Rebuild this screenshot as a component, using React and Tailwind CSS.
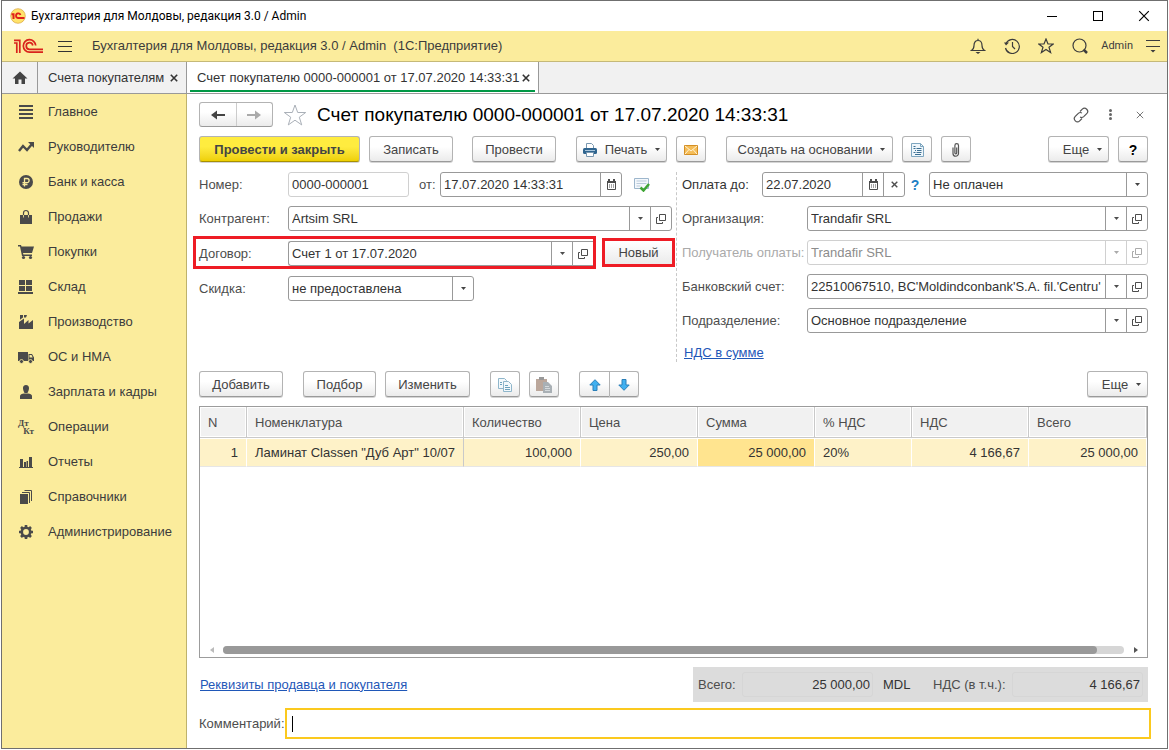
import { useState } from 'react'
import clsx from 'clsx'

const sections = [
  { title: 'Главное', icon: 'lines' },
  { title: 'Руководителю', icon: 'trend' },
  { title: 'Банк и касса', icon: 'ruble' },
  { title: 'Продажи', icon: 'bag' },
  { title: 'Покупки', icon: 'cart' },
  { title: 'Склад', icon: 'boxes' },
  { title: 'Производство', icon: 'factory' },
  { title: 'ОС и НМА', icon: 'truck' },
  { title: 'Зарплата и кадры', icon: 'person' },
  { title: 'Операции', icon: 'dtkt' },
  { title: 'Отчеты', icon: 'chart' },
  { title: 'Справочники', icon: 'books' },
  { title: 'Администрирование', icon: 'gear' },
]

const columns = [
  { key: 'n', title: 'N', col: 'w-[47px]', right: true },
  { key: 'item', title: 'Номенклатура', col: 'w-[217px]', pinned: true },
  { key: 'qty', title: 'Количество', col: 'w-[117px]', right: true },
  { key: 'price', title: 'Цена', col: 'w-[117px]', right: true },
  { key: 'sum', title: 'Сумма', col: 'w-[117px]', right: true },
  { key: 'rate', title: '% НДС', col: 'w-[97px]' },
  { key: 'vat', title: 'НДС', col: 'w-[117px]', right: true },
  { key: 'total', title: 'Всего', col: 'w-[118px]', right: true },
]

const rows = [
  {
    n: '1',
    item: 'Ламинат Classen "Дуб Арт" 10/07',
    qty: '100,000',
    price: '250,00',
    sum: '25 000,00',
    rate: '20%',
    vat: '4 166,67',
    total: '25 000,00',
  },
]

const sectionShapes = {
  lines: <path d="M1 1h14v2H1zM1 5h14v2H1zM1 9h14v2H1zM1 13h14v2H1z" />,
  trend: (
    <>
      <path d="M1 12l4-5 4 4 5-6" fill="none" stroke="currentColor" strokeWidth="2.4" />
      <path d="M10 3h6v6z" />
    </>
  ),
  ruble: (
    <>
      <circle cx="8" cy="8" r="7" />
      <path d="M6.5 12.500V4.500h2.500a2 2 0 0 1 0 4.200H4.500M4.500 10.500h5" fill="none" stroke="#fbec9c" strokeWidth="1.300" />
    </>
  ),
  bag: (
    <>
      <path d="M2 6h12v9H2z" />
      <path d="M5.500 8V4a2.500 2.500 0 0 1 5 0v4" fill="none" stroke="currentColor" strokeWidth="1.200" />
      <path d="M5.500 6v2.500M10.500 6v2.500" stroke="#fbec9c" strokeWidth="0.800" />
    </>
  ),
  cart: (
    <>
      <path d="M0 1h3l.5 1.500H16L14 9H5l.4 1.500H14V12H4L2 2.500H0z" />
      <circle cx="5.500" cy="13.500" r="1.600" />
      <circle cx="12.500" cy="13.500" r="1.600" />
    </>
  ),
  boxes: <path d="M1 1h6v5H1zM8 1h6v5H8zM1 7h6v5H1zM8 7h6v5H8zM0 13h15v2H0z" />,
  factory: <path d="M1 15V8l5-3.500V10l4.500-4v3.500L15 6v9zM2 1h3v2.500L2 5.800zM6 1h3L8 3.500H6z" />,
  truck: (
    <>
      <path d="M0 3h10v9H0zM10.500 5H14l2 3.500V12h-5.500z" />
      <path d="M11.500 6h2l1.200 2.500h-3.200z" fill="#fbec9c" />
      <circle cx="3.500" cy="12.500" r="2" stroke="#fbec9c" strokeWidth="0.800" />
      <circle cx="12.500" cy="12.500" r="2" stroke="#fbec9c" strokeWidth="0.800" />
    </>
  ),
  person: (
    <>
      <path d="M8 1c2 0 3.200 1.200 3 3.500C10.800 6.500 9.800 8 9.500 9h-3C6.200 8 5.200 6.500 5 4.500 4.800 2.200 6 1 8 1z" />
      <path d="M2 15v-3c0-1.500 2-2.500 4-2.500h4c2 0 4 1 4 2.500v3z" />
    </>
  ),
  chart: <path d="M1 13h14v1H1zM2 5h3v8H2zM6 8h2v5H6zM8.500 7h1.500v6H8.500zM11 3h3v10h-3z" />,
  books: (
    <>
      <path d="M2 5h8v10H2z" />
      <path d="M4 3.500h7.500V14M6.500 1.500h7V12" fill="none" stroke="currentColor" />
    </>
  ),
  gear: (
    <>
      <circle cx="8" cy="8" r="4.200" fill="none" stroke="currentColor" strokeWidth="2.600" />
      <path
        d="M8 1v2.500M8 12.500V15M1 8h2.500M12.500 8H15M3 3l2 2M11 11l2 2M3 13l2-2M11 5l2-2"
        stroke="currentColor"
        strokeWidth="2.600"
      />
    </>
  ),
}

function SectionIcon({ name }) {
  if (name === 'dtkt') {
    return (
      <span aria-hidden="true" className="flex h-4 w-4 flex-col font-['Liberation_Serif',serif] text-[9px] leading-[8px] font-bold">
        <span>Дт</span>
        <span className="self-end">Кт</span>
      </span>
    )
  }
  return (
    <svg viewBox="0 0 16 16" className="h-4 w-4 shrink-0" fill="currentColor" aria-hidden="true">
      {sectionShapes[name]}
    </svg>
  )
}

function Logo({ className }) {
  return (
    <svg viewBox="0 0 30 16" className={className} fill="none" stroke="#d9231c" strokeWidth="1.700" aria-hidden="true">
      <path d="M0 5h2.800V15M0 2.300h5.800V15" />
      <path d="M21.700 7.500A6.200 6.200 0 1 0 15.500 14.100H29" />
      <path d="M18.800 7.500A3.300 3.300 0 1 0 15.500 11.300H29" />
    </svg>
  )
}

function Caret({ className }) {
  return (
    <svg viewBox="0 0 5 3" className={clsx('h-[3px] w-[5px] shrink-0', className)} fill="currentColor" aria-hidden="true">
      <path d="M0 0h5L2.500 3z" />
    </svg>
  )
}

function CalendarIcon() {
  return (
    <svg viewBox="0 0 11 11" className="h-[11px] w-[11px]" aria-hidden="true">
      <path d="M1.500 2.500h8v8h-8z" fill="none" stroke="currentColor" />
      <path d="M1 2h9v2H1zM2 0h2v2H2zM7 0h2v2H7z" fill="currentColor" />
      <path d="M3 6h1M5 6h1M7 6h1M3 8h1M5 8h1M7 8h1" stroke="currentColor" />
    </svg>
  )
}

function OpenIcon() {
  return (
    <svg viewBox="0 0 10 10" className="h-[10px] w-[10px]" fill="none" stroke="currentColor" aria-hidden="true">
      <path d="M3.500 .5h6v6h-6zM2 3.500H.5v6h6V8" />
    </svg>
  )
}

function CrossIcon({ className, width = 1 }) {
  return (
    <svg viewBox="0 0 10 10" className={className} fill="none" stroke="currentColor" strokeWidth={width} aria-hidden="true">
      <path d="M1 1l8 8M9 1L1 9" />
    </svg>
  )
}

function Button({ className, children, ...props }) {
  return (
    <button
      type="button"
      className={clsx(
        'flex h-[26px] shrink-0 items-center justify-center rounded-[3px] border border-[#b3b3b3] border-b-[#9a9a9a] bg-linear-to-b from-white from-40% to-[#ebebeb] pt-px whitespace-nowrap text-[#444] shadow-[0_1px_0_#d5d5d5]',
        className
      )}
      {...props}
    >
      {children}
    </button>
  )
}

const actionIcons = {
  list: <Caret />,
  open: <OpenIcon />,
  calendar: <CalendarIcon />,
  clear: <CrossIcon className="h-[7px] w-[7px]" width={2} />,
}

const actionTitles = { list: 'Выбрать', open: 'Открыть', calendar: 'Календарь', clear: 'Очистить' }

function Field({ id, value, actions = [], className, disabled, readOnly }) {
  return (
    <div
      className={clsx(
        'flex h-[25px] min-w-0 overflow-hidden rounded-[3px] border bg-white',
        disabled ? 'border-[#d0d0d0] text-[#8c8c8c]' : readOnly ? 'border-[#d0d0d0] text-[#333]' : 'border-[#999] text-[#333]',
        className
      )}
    >
      <input
        id={id}
        defaultValue={value}
        disabled={disabled}
        readOnly={readOnly}
        className="mr-[2px] min-w-0 flex-1 bg-transparent pl-[3px] outline-none"
      />
      {actions.map((name) => (
        <button
          key={name}
          type="button"
          disabled={disabled}
          aria-label={actionTitles[name]}
          className={clsx(
            'flex w-[21px] shrink-0 items-center justify-center border-l',
            disabled ? 'border-[#d0d0d0] text-[#aaa]' : 'border-[#999] text-[#4d4d4d]'
          )}
        >
          {actionIcons[name]}
        </button>
      ))}
    </div>
  )
}

function SelectField({ id, options, className, label }) {
  return (
    <div className={clsx('flex h-[25px] overflow-hidden rounded-[3px] border border-[#999] bg-white text-[#333]', className)}>
      <select id={id} aria-label={label} className="min-w-0 flex-1 appearance-none pl-[3px] outline-none">
        {options.map((option) => (
          <option key={option}>{option}</option>
        ))}
      </select>
      <span className="pointer-events-none flex w-[21px] items-center justify-center border-l border-[#999] text-[#444]">
        <Caret />
      </span>
    </div>
  )
}

function TitleBar() {
  return (
    <header className="flex h-[30px] items-center bg-white pl-2 text-black">
      <svg viewBox="0 0 16 16" className="h-4 w-4" aria-hidden="true">
        <circle cx="8" cy="8" r="7.300" fill="#ffe36b" stroke="#d9a441" strokeWidth="0.700" />
        <path d="M1.500 6.300h2V11" fill="none" stroke="#e0201b" strokeWidth="2" />
        <path d="M10.500 7A2.300 2.300 0 1 0 8 10h6.500" fill="none" stroke="#e0201b" strokeWidth="1.800" />
      </svg>
      <span className="ml-[5px] flex-1 font-['Roboto','Noto_Sans',sans-serif] text-[12px]">
        Бухгалтерия для Молдовы, редакция 3.0 / Admin
      </span>
      <button type="button" aria-label="Свернуть" className="flex w-[46px] justify-center">
        <span className="h-px w-[10px] bg-black" />
      </button>
      <button type="button" aria-label="Развернуть" className="flex w-[46px] justify-center">
        <span className="h-[10px] w-[10px] border border-black" />
      </button>
      <button type="button" aria-label="Закрыть окно" className="flex w-[46px] justify-center">
        <CrossIcon className="h-3 w-3" />
      </button>
    </header>
  )
}

function AppBar() {
  return (
    <div className="flex h-[31px] items-center border-b border-[#c5b978] bg-[#fbec9c] pr-[7px] pl-3 text-[#3c3c3c]">
      <Logo className="h-4 w-[30px]" />
      <button type="button" aria-label="Меню" className="ml-[14px] flex w-[14px] flex-col gap-1">
        <span className="h-px bg-[#333]" />
        <span className="h-px bg-[#333]" />
        <span className="h-px bg-[#333]" />
      </button>
      <span className="ml-5 flex-1 whitespace-pre">Бухгалтерия для Молдовы, редакция 3.0 / Admin  (1С:Предприятие)</span>
      <div className="flex items-center gap-[18px]">
        <button type="button" aria-label="Уведомления">
          <svg viewBox="0 0 16 16" className="h-4 w-4" fill="none" stroke="currentColor" strokeWidth="1.200">
            <path d="M1.500 12.500h13c-2-1.200-2.500-3-2.500-5C12 4.500 10.500 2.500 8 2.500S4 4.500 4 7.500c0 2-.5 3.800-2.500 5zM8 2.500V.800" />
            <path d="M5.500 14h5L8 16z" fill="currentColor" stroke="none" />
          </svg>
        </button>
        <button type="button" aria-label="История">
          <svg viewBox="0 0 16 16" className="h-4 w-4" fill="none" stroke="currentColor" strokeWidth="1.200">
            <path d="M2 5.500A7 7 0 1 1 1.500 10M8.500 4v4.500L11 11" />
            <path d="M0 4.500h5L2 7.500z" fill="currentColor" stroke="none" />
          </svg>
        </button>
        <button type="button" aria-label="Избранное">
          <svg viewBox="0 0 16 16" className="h-4 w-4" fill="none" stroke="currentColor" strokeWidth="1.200">
            <path d="M8 1l2 5h5.200l-4.200 3.300 1.600 5.200L8 11.400l-4.600 3.100L5 9.300.800 6H6z" />
          </svg>
        </button>
        <button type="button" aria-label="Поиск">
          <svg viewBox="0 0 16 16" className="h-4 w-4" fill="none" stroke="currentColor" strokeWidth="1.200">
            <circle cx="7.500" cy="7.500" r="6.500" />
            <path d="M11.500 11.500l3.500 3.500" strokeWidth="2.500" />
          </svg>
        </button>
      </div>
      <a href="#user" className="ml-[13px] font-['Roboto',sans-serif] text-[11px]">
        Admin
      </a>
      <button type="button" aria-label="Настройки" className="ml-[13px]">
        <svg viewBox="0 0 14 14" className="h-[14px] w-[14px]" fill="none" stroke="currentColor">
          <path d="M0 1.500h14M0 7.500h14" />
          <path d="M4.500 11h5L7 13.500z" fill="currentColor" stroke="none" />
        </svg>
      </button>
    </div>
  )
}

function OpenTabs() {
  return (
    <nav className="flex h-8 border-b border-[#999] bg-[#f1f1f1] text-[#333]">
      <a href="#home" aria-label="Начальная страница" className="flex w-9 items-center justify-center border-r border-[#999] text-[#444]">
        <svg viewBox="0 0 16 14" className="h-[14px] w-4" fill="currentColor">
          <path d="M8 .5L15.500 7.500H13V13H9.500V8.500h-3V13H3V7.500H.5z" />
        </svg>
      </a>
      <div className="flex w-[149px] items-center justify-between border-r border-[#999] pr-2 pl-[10px]">
        <a href="#invoices" className="whitespace-nowrap">Счета покупателям</a>
        <button type="button" aria-label="Закрыть вкладку">
          <CrossIcon className="h-2 w-2" width={2} />
        </button>
      </div>
      <div className="flex w-[352px] flex-col border-r border-[#999] bg-white px-[3px] pt-[3px] pb-px">
        <div className="flex flex-1 items-center justify-between border-b-2 border-[#009846] pr-[5px] pl-[7px]">
          <a href="#invoice" className="whitespace-nowrap">Счет покупателю 0000-000001 от 17.07.2020 14:33:31</a>
          <button type="button" aria-label="Закрыть вкладку">
            <CrossIcon className="h-2 w-2" width={2} />
          </button>
        </div>
      </div>
    </nav>
  )
}

function Sidebar() {
  return (
    <aside className="w-[185px] shrink-0 border-r border-[#beb26c] bg-[#fbec9c] text-[#3c3c3c]">
      {sections.map(({ title, icon }) => (
        <a key={title} href="#section" className="flex h-[35px] items-center gap-[14px] pt-px pl-4 whitespace-nowrap">
          <span className="text-[#4a4a4a]">
            <SectionIcon name={icon} />
          </span>
          {title}
        </a>
      ))}
    </aside>
  )
}

function FormHeader() {
  return (
    <div className="flex h-[25px] items-center">
      <div className="flex h-[25px] w-[74px] rounded-[3px] border border-[#b3b3b3] border-b-[#9a9a9a] bg-linear-to-b from-white from-40% to-[#ebebeb]">
        <button type="button" aria-label="Назад" className="flex flex-1 items-center justify-center border-r border-[#ccc] text-[#444]">
          <svg viewBox="0 0 14 10" className="h-[10px] w-[14px]" fill="none" stroke="currentColor" strokeWidth="2">
            <path d="M14 5H3" />
            <path d="M0 5l6-4.500v9z" fill="currentColor" stroke="none" />
          </svg>
        </button>
        <button type="button" aria-label="Вперед" className="flex flex-1 items-center justify-center text-[#aaa]">
          <svg viewBox="0 0 14 10" className="h-[10px] w-[14px]" fill="none" stroke="currentColor" strokeWidth="2">
            <path d="M0 5h11" />
            <path d="M14 5L8 .5v9z" fill="currentColor" stroke="none" />
          </svg>
        </button>
      </div>
      <button type="button" aria-label="В избранное" className="ml-[10px]">
        <svg viewBox="0 0 24 22" className="h-[22px] w-6" fill="none" stroke="#aab0b8">
          <path d="M12 1l2.700 7.500h8l-6.400 4.700 2.400 7.700L12 16.200l-6.700 4.700 2.400-7.700L1.300 8.500h8z" />
        </svg>
      </button>
      <h1 className="ml-[10px] flex-1 text-[19px] whitespace-nowrap text-black">Счет покупателю 0000-000001 от 17.07.2020 14:33:31</h1>
      <div className="flex items-center pr-1 text-[#555]">
        <button type="button" aria-label="Получить ссылку">
          <svg viewBox="0 0 16 16" className="h-4 w-4" fill="none" stroke="currentColor" strokeWidth="1.200">
            <path d="M7 4.500l2.300-2.300a3 3 0 0 1 4.400 4.400l-3 3a3 3 0 0 1-3.600.4M9 11.500l-2.300 2.300a3 3 0 0 1-4.400-4.400l3-3a3 3 0 0 1 3.600-.4" />
          </svg>
        </button>
        <button type="button" aria-label="Еще действия" className="ml-5 flex w-[3px] flex-col gap-px">
          <span className="h-[3px] rounded-full bg-[#666]" />
          <span className="h-[3px] rounded-full bg-[#666]" />
          <span className="h-[3px] rounded-full bg-[#666]" />
        </button>
        <button type="button" aria-label="Закрыть" className="ml-6">
          <CrossIcon className="h-2 w-2" />
        </button>
      </div>
    </div>
  )
}

function CommandBar() {
  return (
    <div className="mt-[9px] flex">
      <Button className="w-[161px] border-[#a89000] border-b-[#a89000] from-[#ffec3f]! from-0% to-[#eed000]! font-bold">
        Провести и закрыть
      </Button>
      <Button className="ml-[9px] w-[84px]">Записать</Button>
      <Button className="ml-[19px] w-[84px]">Провести</Button>
      <Button className="ml-5 w-[91px]">
        <svg viewBox="0 0 14 14" className="mr-2 h-[14px] w-[14px]" aria-hidden="true">
          <path d="M3.500.5h5l2 2V6h-7z" fill="#fff" stroke="#7a98b0" />
          <rect y="5" width="14" height="6" rx="1.500" fill="#30658f" />
          <path d="M2 7.500h10" stroke="#a9c6dc" />
          <path d="M3.500 9.500h7v4h-7z" fill="#fff" stroke="#7a98b0" />
        </svg>
        Печать
        <Caret className="ml-2" />
      </Button>
      <Button className="ml-[9px] w-[30px]" aria-label="Отправить по почте">
        <svg viewBox="0 0 14 10" className="h-[10px] w-[14px]">
          <path d="M.5.5h13v9H.5z" fill="#f5bd58" stroke="#d48f24" />
          <path d="M1 1l6 5 6-5M1 9l4-4.500M13 9L9 4.500" fill="none" stroke="#fff3d6" />
        </svg>
      </Button>
      <Button className="ml-5 w-[167px] pl-1">
        Создать на основании
        <Caret className="ml-2" />
      </Button>
      <Button className="ml-[9px] w-[30px]" aria-label="Отчет">
        <svg viewBox="0 0 13 14" className="h-[14px] w-[13px]" fill="none">
          <path d="M.5.5h9l3 3v10H.5z" fill="#eef6fb" stroke="#7ea6bf" />
          <path d="M9.500.5v3h3" stroke="#7ea6bf" />
          <path d="M2.500 3.500h2M2.500 5.500h2M5.500 5.500h5M4 7.500h1M6 7.500h4.500M2.500 9.500h2M5.500 9.500h5M4 11.500h6" stroke="#3c6f92" />
        </svg>
      </Button>
      <Button className="ml-[9px] w-[30px]" aria-label="Файлы">
        <svg viewBox="0 0 8 14" className="h-[14px] w-2" fill="none" stroke="#555" strokeWidth="1.200">
          <path d="M1 4.500v6a2.500 2.500 0 0 0 5.500 0v-8a1.800 1.800 0 0 0-3.600 0v7.500a.9.9 0 0 0 1.800 0V4.500" />
        </svg>
      </Button>
      <Button className="ml-auto w-[61px] pl-2">
        Еще
        <Caret className="ml-2" />
      </Button>
      <Button className="ml-[9px] w-[30px] text-[14px] font-bold text-black!" aria-label="Справка">
        ?
      </Button>
    </div>
  )
}

function InvoiceForm() {
  return (
    <form className="mt-[10px] grid grid-cols-[477fr_472fr] text-[#4d4d4d]">
      <div className="pr-1">
        <div className="flex items-center">
          <label htmlFor="number" className="w-[89px] shrink-0">Номер:</label>
          <Field id="number" value="0000-000001" readOnly className="w-[121px]" />
          <label htmlFor="date" className="w-[31px] shrink-0 pl-[10px]">от:</label>
          <Field id="date" value="17.07.2020 14:33:31" actions={['calendar']} className="w-[182px]" />
          <svg viewBox="0 0 16 14" className="ml-3 h-[14px] w-4" aria-hidden="true">
            <path d="M.5.5h14v10H.5z" fill="#f4f8fc" stroke="#9db6cc" />
            <path d="M2.500 3h10M2.500 5.500h10M2.500 8h4" stroke="#b9cadb" />
            <path d="M6.500 9.500l3 3 5.500-6.500" fill="none" stroke="#3fa535" strokeWidth="2.500" />
          </svg>
        </div>
        <div className="mt-[9px] flex items-center">
          <label htmlFor="partner" className="w-[89px] shrink-0">Контрагент:</label>
          <Field id="partner" value="Artsim SRL" actions={['list', 'open']} className="flex-1" />
        </div>
        <div className="mt-[5px] -mr-[3px] -ml-1.5 flex items-center">
          <div className="flex h-[33px] flex-1 items-center border-[3px] border-[#ee1c25] pt-[2px] pl-[3px]">
            <label htmlFor="contract" className="w-[89px] shrink-0">Договор:</label>
            <Field id="contract" value="Счет 1 от 17.07.2020" actions={['list', 'open']} className="flex-1 rounded-r-none border-r-0" />
          </div>
          <button
            type="button"
            className="ml-[6px] h-[29px] w-[73px] border-[3px] border-[#ee1c25] bg-linear-to-b from-white to-[#ebebeb] pt-px text-[#444]"
          >
            Новый
          </button>
        </div>
        <div className="mt-[7px] flex items-center">
          <label htmlFor="discount" className="w-[89px] shrink-0">Скидка:</label>
          <SelectField id="discount" options={['не предоставлена', 'предоставлена']} className="w-[186px]" />
        </div>
      </div>

      <div className="flex h-[190px] flex-col gap-[9px] border-l border-dashed border-[#c8c8c8] pl-[5px]">
        <div className="flex items-center">
          <label htmlFor="due" className="w-[80px] shrink-0 whitespace-nowrap text-[#333]">Оплата до:</label>
          <Field id="due" value="22.07.2020" actions={['calendar', 'clear']} className="w-[143px]" />
          <button type="button" aria-label="Подсказка" className="w-6 pr-1 text-[14px] font-bold text-[#1f7fc4]">?</button>
          <SelectField label="Состояние оплаты" options={['Не оплачен', 'Оплачен']} className="flex-1" />
        </div>
        <div className="flex items-center">
          <label htmlFor="company" className="w-[125px] shrink-0">Организация:</label>
          <Field id="company" value="Trandafir SRL" actions={['list', 'open']} className="flex-1" />
        </div>
        <div className="flex items-center">
          <label htmlFor="payee" className="w-[125px] shrink-0 whitespace-nowrap text-[#aaa]">Получатель оплаты:</label>
          <Field id="payee" value="Trandafir SRL" disabled actions={['list', 'open']} className="flex-1" />
        </div>
        <div className="flex items-center">
          <label htmlFor="account" className="w-[125px] shrink-0 whitespace-nowrap">Банковский счет:</label>
          <Field
            id="account"
            value="22510067510, BC'Moldindconbank'S.A. fil.'Centru' Chisinau"
            actions={['list', 'open']}
            className="flex-1"
          />
        </div>
        <div className="flex items-center">
          <label htmlFor="department" className="w-[125px] shrink-0">Подразделение:</label>
          <Field id="department" value="Основное подразделение" actions={['list', 'open']} className="flex-1" />
        </div>
        <a href="#vat" className="ml-[2px] self-start leading-[22px] text-[#1f57b8] underline">НДС в сумме</a>
      </div>
    </form>
  )
}

function TableBar() {
  return (
    <div className="mt-[9px] flex">
      <Button className="w-[84px]">Добавить</Button>
      <Button className="ml-5 w-[73px]">Подбор</Button>
      <Button className="ml-[9px] w-[85px]">Изменить</Button>
      <Button className="ml-5 w-[30px]" aria-label="Скопировать">
        <svg viewBox="0 0 14 14" className="h-[14px] w-[14px]" fill="#f3f9fc" stroke="#8fb6cb">
          <path d="M.5.5h6l2 2v8h-8z" />
          <path d="M5.500 3.500h5l3 3v7h-8z" />
          <path d="M7 7.500h3M7 9.500h5M7 11.500h5M2 4.500h2M2 6.500h2" stroke="#6da2bd" />
        </svg>
      </Button>
      <Button className="ml-[9px] w-[30px]" aria-label="Вставить" disabled>
        <svg viewBox="0 0 16 16" className="h-4 w-4">
          <path d="M0 2h11v12H0z" fill="#bba79b" />
          <path d="M3 0h5v3H3z" fill="#999" />
          <path d="M7 5h5l4 4v7H7z" fill="#a9b0b5" />
          <path d="M9 9.500h4M9 11.500h5M9 13.500h5" stroke="#d5dadd" />
        </svg>
      </Button>
      <Button className="ml-5 w-[31px] rounded-r-none" aria-label="Переместить вверх">
        <svg viewBox="0 0 12 12" className="h-3 w-3" fill="#40b0f0" stroke="#2a7fb8">
          <path d="M6 .7l5.200 5.300H8v5.500H4V6H.800z" />
        </svg>
      </Button>
      <Button className="w-[29px] rounded-l-none border-l-0" aria-label="Переместить вниз">
        <svg viewBox="0 0 12 12" className="h-3 w-3" fill="#40b0f0" stroke="#2a7fb8">
          <path d="M6 11.300L.800 6H4V.5h4V6h3.200z" />
        </svg>
      </Button>
      <Button className="ml-auto w-[61px] pl-2">
        Еще
        <Caret className="ml-2" />
      </Button>
    </div>
  )
}

function GoodsTable() {
  const [active, setActive] = useState('sum')

  return (
    <div className="mt-[9px] flex min-h-[160px] flex-1 flex-col border border-[#9c9c9c] bg-white">
      <table className="w-full table-fixed border-separate border-spacing-0">
        <thead>
          <tr>
            {columns.map(({ key, title, col }) => (
              <th
                key={key}
                className={clsx(
                  'h-[31px] border-r border-b border-[#c9c9c9] bg-[#f1f1f1] pt-px pl-2 text-left font-normal text-[#4d4d4d] shadow-[inset_0_0_0_1px_#fff]',
                  col
                )}
              >
                {title}
              </th>
            ))}
          </tr>
        </thead>
        <tbody>
          {rows.map((row) => (
            <tr key={row.n}>
              {columns.map(({ key, right, pinned }) => (
                <td
                  key={key}
                  onClick={() => setActive(key)}
                  className={clsx(
                    'h-[29px] border-r border-b border-b-[#e6e6e6] px-2 pt-px whitespace-nowrap text-[#333] shadow-[inset_0_1px_0_#fff]',
                    pinned ? 'border-r-[#c9c9c9]' : 'border-r-white',
                    right && 'text-right',
                    active === key ? 'bg-[#ffe48f]' : 'bg-[#fef2c8]'
                  )}
                >
                  {row[key]}
                </td>
              ))}
            </tr>
          ))}
        </tbody>
      </table>
      <div className="mt-auto flex h-[15px] items-center pr-[9px] pl-[10px]">
        <svg viewBox="0 0 4 6" className="h-1.5 w-1" fill="#bbb" aria-hidden="true">
          <path d="M4 0v6L0 3z" />
        </svg>
        <div className="mr-[10px] ml-[9px] h-2 flex-1 rounded-full bg-[#d6d6d6]">
          <div className="h-2 w-[97%] rounded-full bg-[#999]" />
        </div>
        <svg viewBox="0 0 4 6" className="h-1.5 w-1" fill="#555" aria-hidden="true">
          <path d="M0 0v6l4-3z" />
        </svg>
      </div>
    </div>
  )
}

function Footer() {
  return (
    <>
      <div className="mt-[9px] flex h-[35px] items-center justify-between">
        <a href="#details" className="ml-px text-[#1f57b8] underline">Реквизиты продавца и покупателя</a>
        <div className="flex h-[35px] items-center bg-[#dcdcdc] pr-[5px] pl-[5px] text-[#4d4d4d]">
          <label htmlFor="total" className="w-11">Всего:</label>
          <input
            id="total"
            readOnly
            value="25 000,00"
            className="h-[25px] w-[131px] rounded-[3px] border border-[#d6d6d6] pr-[2px] text-right text-[#333] outline-none"
          />
          <span className="w-[60px] pl-[10px] text-[#333]">MDL</span>
          <label htmlFor="vat-total" className="w-[79px] whitespace-nowrap">НДС (в т.ч.):</label>
          <input
            id="vat-total"
            readOnly
            value="4 166,67"
            className="h-[25px] w-[131px] rounded-[3px] border border-[#d6d6d6] pr-[2px] text-right text-[#333] outline-none"
          />
        </div>
      </div>
      <div className="mt-1.5 -mr-[3px] flex items-center text-[#4d4d4d]">
        <label htmlFor="comment" className="w-[86px] shrink-0">Комментарий:</label>
        <div className="flex h-[31px] flex-1 items-center border-2 border-[#fbc91e] bg-white pl-[5px]">
          <span className="h-4 w-px bg-black" />
          <input id="comment" className="min-w-0 flex-1 caret-transparent outline-none" />
        </div>
      </div>
    </>
  )
}

export default function App() {
  return (
    <div className="flex min-h-screen flex-col bg-white px-px pb-px font-['Liberation_Sans',Arial,sans-serif] text-[13px] leading-4">
      <div className="flex flex-1 flex-col border border-[#6f6f6f]">
        <TitleBar />
        <AppBar />
        <OpenTabs />
        <div className="flex flex-1">
          <Sidebar />
          <main className="flex min-w-0 flex-1 flex-col pt-2 pr-[19px] pb-[9px] pl-3">
            <FormHeader />
            <CommandBar />
            <InvoiceForm />
            <TableBar />
            <GoodsTable />
            <Footer />
          </main>
        </div>
      </div>
    </div>
  )
}
